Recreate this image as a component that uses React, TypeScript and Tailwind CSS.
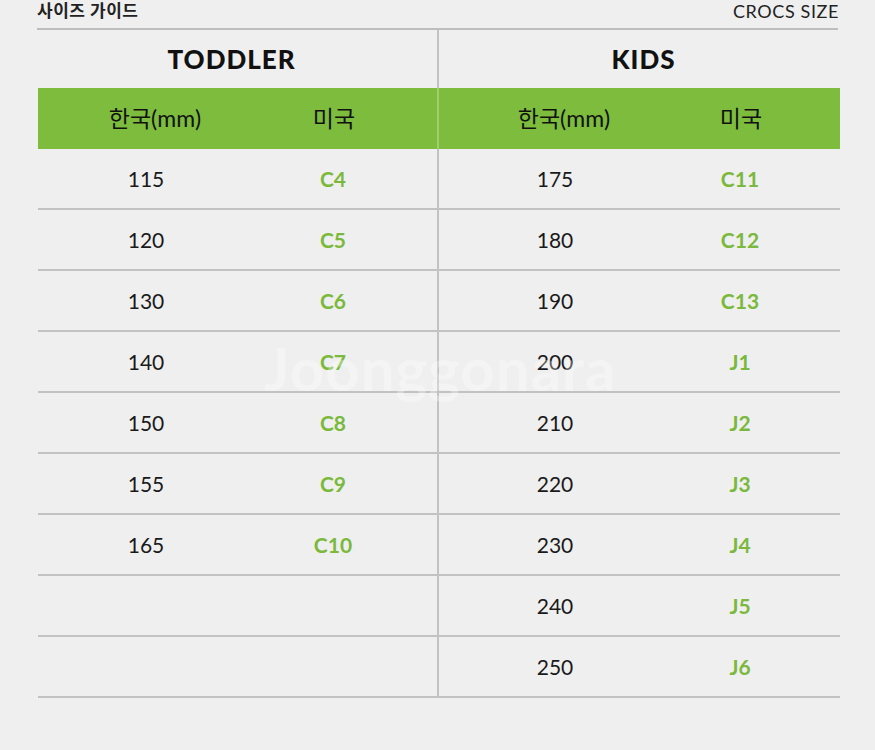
import React from 'react';

const toddler = [
  ['115', 'C4'],
  ['120', 'C5'],
  ['130', 'C6'],
  ['140', 'C7'],
  ['150', 'C8'],
  ['155', 'C9'],
  ['165', 'C10'],
  ['', ''],
  ['', ''],
];

const kids = [
  ['175', 'C11'],
  ['180', 'C12'],
  ['190', 'C13'],
  ['200', 'J1'],
  ['210', 'J2'],
  ['220', 'J3'],
  ['230', 'J4'],
  ['240', 'J5'],
  ['250', 'J6'],
];

const font = { fontFamily: 'Lato, "Noto Sans CJK KR", sans-serif' };

function Half({ a, b, left, head }: { a: string; b: string; left: boolean; head?: boolean }) {
  const numCls = head ? 'pl-[18px] text-[23px] text-[#111]' : 'text-[21px] text-[#1a1a1a]';
  const sizeCls = head ? 'pl-[2px] text-[23px] text-[#111]' : 'text-[21px] font-bold text-[#7ab93b]';
  return (
    <div
      className={`flex h-full items-center ${
        left ? 'w-[401px] border-r-2 ' + (head ? 'border-[#9fcf6e]' : 'border-[#c2c2c2]') : 'flex-1'
      }`}
    >
      <div className={`${left ? 'w-[216px]' : 'w-[232px]'} text-center ${numCls}`}>{a}</div>
      <div className={`${left ? 'w-[158px]' : 'w-[138px]'} text-center ${sizeCls}`}>{b}</div>
    </div>
  );
}

export default function App() {
  return (
    <div className="relative w-[875px] h-[750px] overflow-hidden bg-[#efefef]" style={font}>
      {/* title bar */}
      <div className="mx-[37px] flex h-[30px] items-start justify-between border-b-2 border-[#bdbdbd]">
        <span className="text-[17px] leading-[22px] font-bold tracking-[0.5px] text-[#222]">사이즈 가이드</span>
        <span className="mr-[-1px] text-[18px] leading-[22px] tracking-[0.6px] text-[#222]">CROCS SIZE</span>
      </div>

      <div className="mx-[38px] w-[802px]">
        {/* section titles */}
        <div className="flex h-[58px] items-center">
          <div className="flex h-full w-[401px] items-center justify-center border-r-2 border-[#c2c2c2] pr-[12px] text-[26px] font-black tracking-[1px] text-[#111]">
            TODDLER
          </div>
          <div className="flex h-full flex-1 items-center justify-center pl-[8px] text-[26px] font-black tracking-[1px] text-[#111]">
            KIDS
          </div>
        </div>

        {/* green header */}
        <div className="flex h-[61px] bg-[#7dbc3d]">
          <Half a="한국(mm)" b="미국" left head />
          <Half a="한국(mm)" b="미국" left={false} head />
        </div>

        {/* rows */}
        {toddler.map((t, i) => (
          <div key={i} className="flex h-[61px] border-b-2 border-[#c2c2c2]">
            <Half a={t[0]} b={t[1]} left />
            <Half a={kids[i][0]} b={kids[i][1]} left={false} />
          </div>
        ))}
      </div>

      {/* watermark */}
      <div className="pointer-events-none absolute left-[264px] top-[338px] text-[60px] font-bold leading-none tracking-[1px] text-white/30">
        Joonggonara
      </div>
    </div>
  );
}
